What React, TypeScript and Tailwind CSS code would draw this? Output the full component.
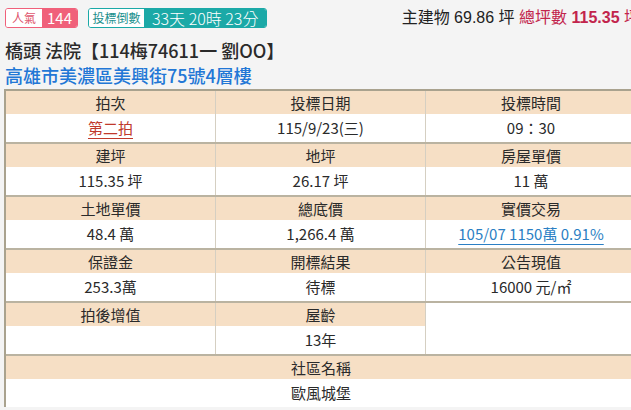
import type { ReactNode } from 'react'

type Cell = { label?: string; value?: ReactNode; blank?: boolean }

const rows: Cell[][] = [
  [
    { label: '拍次', value: <span className="text-[#c0392b] underline decoration-[#c0392b] underline-offset-4">第二拍</span> },
    { label: '投標日期', value: '115/9/23(三)' },
    { label: '投標時間', value: '09：30' },
  ],
  [
    { label: '建坪', value: '115.35 坪' },
    { label: '地坪', value: '26.17 坪' },
    { label: '房屋單價', value: '11 萬' },
  ],
  [
    { label: '土地單價', value: '48.4 萬' },
    { label: '總底價', value: '1,266.4 萬' },
    {
      label: '實價交易',
      value: <span className="text-[#2b7fc4] underline decoration-[#2b7fc4] underline-offset-4">105/07 1150萬 0.91%</span>,
    },
  ],
  [
    { label: '保證金', value: '253.3萬' },
    { label: '開標結果', value: '待標' },
    { label: '公告現值', value: '16000 元/㎡' },
  ],
  [
    { label: '拍後增值', value: '' },
    { label: '屋齡', value: '13年' },
    { blank: true },
  ],
]

const cjk = "font-['Noto_Sans_CJK_TC',sans-serif]"

export default function App() {
  return (
    <div className={`h-[410px] w-[631px] overflow-hidden bg-[#f4f4f4] text-[#2a2a2a] ${cjk}`}>
      <div className="w-[642px] pl-[5px]">
        <div className="flex items-start justify-between pt-[8px]">
          <div className="flex shrink-0 items-center gap-[10px]">
            <div className="flex h-[20px] rounded-[3px] border border-[#f0607a] leading-[18px]">
              <span className="flex w-[36px] items-center justify-center rounded-l-[2px] bg-white text-[12px] text-[#e0566e]">人氣</span>
              <span className="flex w-[35px] items-center justify-center rounded-r-[2px] bg-[#f0607a] text-[15px] text-white">144</span>
            </div>
            <div className="flex h-[20px] rounded-[3px] border border-[#1ba9a7] leading-[18px]">
              <span className="flex w-[55px] items-center justify-center rounded-l-[2px] bg-white text-[12px] text-[#1a8f8d]">投標倒數</span>
              <span className="flex items-center justify-center whitespace-nowrap rounded-r-[2px] bg-[#1ba9a7] px-[8px] text-[16px] font-light text-white">
                33天 20時 23分
              </span>
            </div>
          </div>
          <div className="whitespace-nowrap pr-[2px] font-['Liberation_Sans','Noto_Sans_CJK_TC',sans-serif] text-[16px] leading-[20px] text-[#222]">
            主建物 69.86 坪 <span className="text-[#c2244c]">總坪數 <span className="font-bold">115.35</span> 坪</span>
          </div>
        </div>
        <div className="mt-[10px] text-[18px] leading-[24px] font-medium text-[#2a2a2a]">橋頭 法院【114梅74611一 劉OO】</div>
        <div className="mt-[1px] text-[18px] leading-[24px] font-medium text-[#2277d6]">高雄市美濃區美興街75號4層樓</div>
      </div>
      <div className="ml-[4px] mt-[2px] w-[634px] border-2 border-b-0 border-[#a9a28e] bg-white text-[15px]">
        {rows.map((row, i) => (
          <div key={i} className="grid grid-cols-3 border-b-2 border-[#bab3a1]">
            {row.map((c, j) => (
              <div key={j} className={j < 2 ? 'border-r border-[#d5cfc2]' : ''}>
                {c.blank ? (
                  <div className="h-[51px] bg-white" />
                ) : (
                  <>
                    <div className="h-[23px] bg-[#f6dfc5] text-center leading-[23px]">{c.label}</div>
                    <div className="h-[28px] bg-white text-center leading-[28px]">{c.value}</div>
                  </>
                )}
              </div>
            ))}
          </div>
        ))}
        <div>
          <div className="h-[23px] bg-[#f6dfc5] text-center leading-[23px]">社區名稱</div>
          <div className="h-[28px] bg-white text-center leading-[28px]">歐風城堡</div>
        </div>
      </div>
    </div>
  )
}
